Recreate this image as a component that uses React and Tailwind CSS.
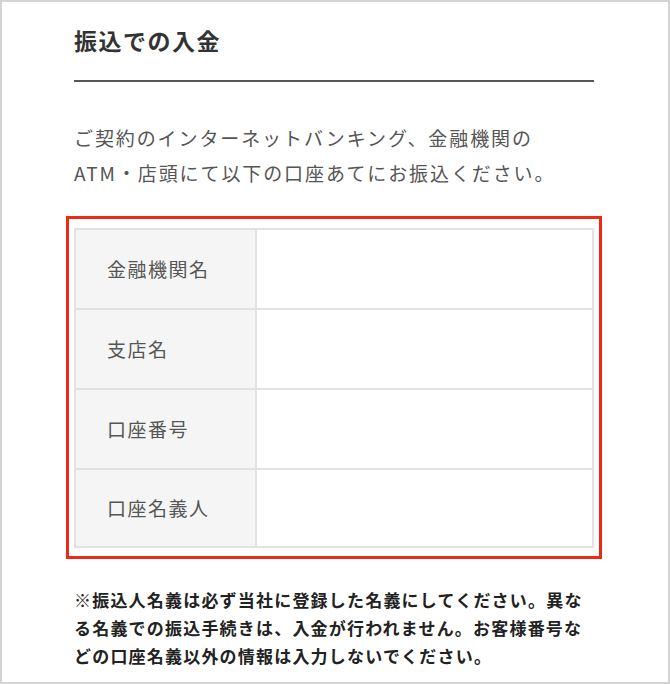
const rows = [
  { label: "金融機関名", h: "h-[78px]" },
  { label: "支店名", h: "h-[80px]" },
  { label: "口座番号", h: "h-[80px]" },
  { label: "口座名義人", h: "h-[78px]" },
];

export default function App() {
  return (
    <div className="h-[684px] w-[670px] border-2 border-[#d4d4d4] bg-white font-['Noto_Sans_CJK_JP',sans-serif]">
      <div className="ml-[72px] w-[520px] pt-[21px]">
        <h2 className="text-[23px] font-bold leading-[34px] tracking-[1.5px] text-[#333]">振込での入金</h2>
        <div className="mt-[23px] h-[2px] bg-[#555]" />

        <p className="mt-[38px] whitespace-nowrap text-[19px] leading-[35px] tracking-[1.9px] text-[#555]">
          ご契約のインターネットバンキング、金融機関の
          <br />
          ATM・店頭にて以下の口座あてにお振込ください。
        </p>

        <div className="-ml-[8px] mt-[26px] w-[536px] border-[3px] border-[#ee2a16] px-[5px] pb-[8px] pt-[9px]">
          <div className="border-2 border-[#e2e2e2]">
            {rows.map((row, i) => (
              <div key={row.label} className={`flex ${row.h} ${i > 0 ? "border-t-2 border-[#e2e2e2]" : ""}`}>
                <div className="flex w-[181px] items-center border-r-2 border-[#e2e2e2] bg-[#f5f5f5] pl-[31px] text-[19px] tracking-[1.5px] text-[#555]">
                  {row.label}
                </div>
                <div className="flex-1 bg-white" />
              </div>
            ))}
          </div>
        </div>

        <p className="mt-[27px] whitespace-nowrap text-[17px] font-bold leading-[28px] tracking-[1.2px] text-[#222]">
          ※振込人名義は必ず当社に登録した名義にしてください。異な
          <br />
          る名義での振込手続きは、入金が行われません。お客様番号な
          <br />
          どの口座名義以外の情報は入力しないでください。
        </p>
      </div>
    </div>
  );
}
